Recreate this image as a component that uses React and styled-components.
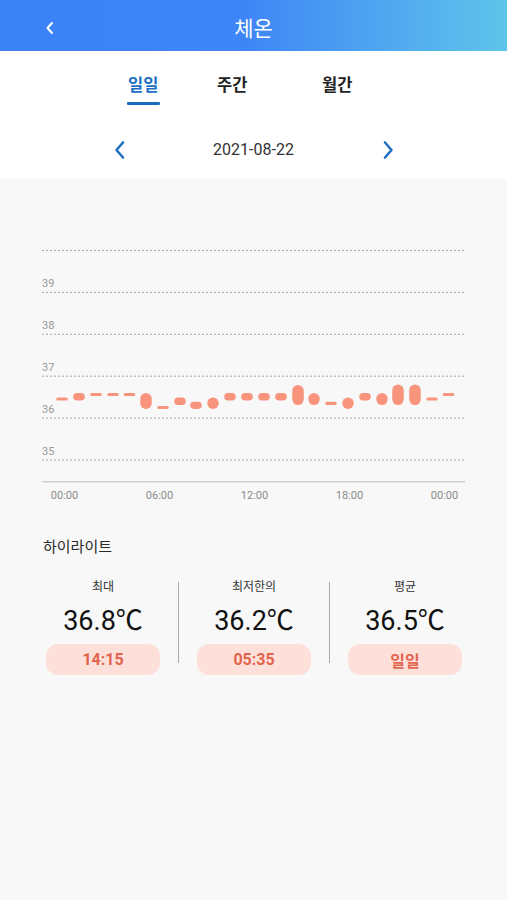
import React, { useState } from 'react';
import styled, { createGlobalStyle } from 'styled-components';

const GlobalStyle = createGlobalStyle`
  html, body {
    margin: 0;
    padding: 0;
    background: #f8f8f8;
  }
  body {
    font-family: Roboto, "Noto Sans CJK KR", sans-serif;
    color: #222;
  }
`;

const Page = styled.div`
  width: 507px;
  min-height: 900px;
  background: #f8f8f8;
`;

const Header = styled.div`
  height: 51px;
  display: flex;
  align-items: center;
  justify-content: center;
  position: relative;
  background: linear-gradient(90deg, #3b82f7 0%, #3e85f7 48%, #5fc4ea 100%);
  color: #fff;
`;

const BackButton = styled.div`
  position: absolute;
  left: 44px;
  top: 20px;
  width: 12px;
  height: 16px;
  display: flex;
`;

const Title = styled.h1`
  margin: 0;
  font-family: "Noto Sans CJK KR", sans-serif;
  font-size: 21px;
  font-weight: 400;
  line-height: 24px;
  margin-top: 2px;
`;

const TopPanel = styled.div`
  background: #fff;
  padding: 22px 0 17px;
`;

const TabBar = styled.div`
  display: grid;
  grid-template-columns: 89px 105px auto;
  padding-left: 128px;
`;

const Tab = styled.div`
  display: flex;
  flex-direction: column;
  align-items: flex-start;
  font-family: "Noto Sans CJK KR", sans-serif;
  font-size: 16.5px;
  font-weight: 700;
  line-height: 22px;
  color: ${p => (p.$active ? '#1b6ec4' : '#222')};
  cursor: pointer;

  &::after {
    content: '';
    display: block;
    width: 33px;
    height: 3.5px;
    margin-top: 6.5px;
    margin-left: -1px;
    border-radius: 1px;
    background: ${p => (p.$active ? '#1b6cc0' : 'transparent')};
  }
`;

const DateRow = styled.div`
  margin-top: 33px;
  height: 24px;
  display: flex;
  align-items: center;
  justify-content: center;
`;

const Arrow = styled.div`
  width: 14px;
  height: 20px;
  display: flex;
  align-items: center;
  justify-content: center;
`;

const DateText = styled.div`
  width: 254px;
  text-align: center;
  font-size: 16px;
  color: #333;
  line-height: 24px;
`;

const ChartWrap = styled.div`
  padding-top: 51px;
`;

const ChartSvg = styled.svg`
  display: block;
`;

const Highlights = styled.div`
  padding: 26px 0 0;
`;

const SectionTitle = styled.div`
  padding-left: 43px;
  font-family: "Noto Sans CJK KR", sans-serif;
  font-size: 15px;
  line-height: 20px;
  color: #2a2a2a;
`;

const StatGrid = styled.div`
  display: grid;
  grid-template-columns: 150px 1px 150px 1px 150px;
  padding-left: 28px;
  margin-top: 22px;
`;

const Divider = styled.div`
  width: 1px;
  height: 81px;
  margin-top: 4px;
  background: #a8a8a8;
`;

const Stat = styled.div`
  display: flex;
  flex-direction: column;
  align-items: center;
`;

const StatLabel = styled.div`
  font-family: "Noto Sans CJK KR", sans-serif;
  font-size: 12px;
  line-height: 16px;
  color: #333;
`;

const StatValue = styled.div`
  margin-top: 11px;
  font-size: 27px;
  line-height: 32px;
  color: #111;
`;

const StatBadge = styled.div`
  margin-top: 7px;
  width: 114px;
  height: 31px;
  border-radius: 12px;
  background: #fde0d9;
  color: #e3644d;
  font-size: 16px;
  font-weight: 700;
  display: flex;
  align-items: center;
  justify-content: center;
`;

// hourly readings: [x, max, min]
const readings = [
  [62, 36.49, 36.42],
  [79, 36.6, 36.42],
  [96, 36.6, 36.535],
  [113, 36.6, 36.535],
  [129.5, 36.6, 36.535],
  [146, 36.6, 36.22],
  [163, 36.29, 36.22],
  [180, 36.49, 36.31],
  [196, 36.39, 36.22],
  [213, 36.49, 36.22],
  [230, 36.6, 36.42],
  [247, 36.6, 36.42],
  [264, 36.6, 36.42],
  [281, 36.6, 36.42],
  [298, 36.79, 36.31],
  [314, 36.6, 36.31],
  [331, 36.39, 36.31],
  [348, 36.49, 36.22],
  [365, 36.6, 36.42],
  [382, 36.6, 36.31],
  [398, 36.8, 36.31],
  [415, 36.8, 36.31],
  [432, 36.49, 36.42],
  [448.5, 36.6, 36.535],
];

const TOP = 230;
const yOf = v => 460 - (v - 35) * 41.9 - TOP;

const Chart = () => {
  const grid = [40, 39, 38, 37, 36, 35];
  const hours = [
    [64.5, '00:00'],
    [159.5, '06:00'],
    [254.5, '12:00'],
    [349.5, '18:00'],
    [444.5, '00:00'],
  ];
  return (
    <ChartSvg width="507" height="280" viewBox="0 0 507 280">
      {grid.map(v => (
        <g key={v}>
          <line
            x1="42"
            x2="465"
            y1={yOf(v)}
            y2={yOf(v)}
            stroke="#a6a6a6"
            strokeWidth="1"
            strokeDasharray="2 2"
          />
          {v < 40 && (
            <text x="42" y={yOf(v) - 5} fontSize="11" fill="#999" fontFamily="Roboto, sans-serif">
              {v}
            </text>
          )}
        </g>
      ))}
      <line x1="42" x2="465" y1={251.7} y2={251.7} stroke="#cfcfcf" strokeWidth="1.5" />
      {hours.map(([x, t], i) => (
        <text
          key={i}
          x={x}
          y={269}
          textAnchor="middle"
          fontSize="11"
          fill="#8a8a8a"
          fontFamily="Roboto, sans-serif"
        >
          {t}
        </text>
      ))}
      {readings.map(([x, hi, lo], i) => {
        const y1 = yOf(hi);
        const h = Math.max(yOf(lo) - y1, 3);
        const w = 11.5;
        return (
          <rect
            key={i}
            x={x - w / 2}
            y={y1}
            width={w}
            height={h}
            rx={Math.min(w / 2, h / 2)}
            fill="#f8937c"
          />
        );
      })}
    </ChartSvg>
  );
};

const tabs = ['일일', '주간', '월간'];

const stats = [
  { label: '최대', value: '36.8℃', badge: '14:15' },
  { label: '최저한의', value: '36.2℃', badge: '05:35' },
  { label: '평균', value: '36.5℃', badge: '일일' },
];

const App = () => {
  const [tab, setTab] = useState(0);

  return (
    <Page>
      <GlobalStyle />
      <Header>
        <BackButton>
          <svg width="12" height="16" viewBox="0 0 12 16">
            <path d="M8 3 L3.5 8 L8 13" fill="none" stroke="#fff" strokeWidth="2" strokeLinecap="round" strokeLinejoin="round" />
          </svg>
        </BackButton>
        <Title>체온</Title>
      </Header>
      <TopPanel>
        <TabBar>
          {tabs.map((t, i) => (
            <Tab key={t} $active={i === tab} onClick={() => setTab(i)}>
              {t}
            </Tab>
          ))}
        </TabBar>
        <DateRow>
          <Arrow>
            <svg width="14" height="20" viewBox="0 0 14 20">
              <path d="M10 2.5 L3.5 10 L10 17.5" fill="none" stroke="#2170c2" strokeWidth="2.6" strokeLinecap="round" strokeLinejoin="round" />
            </svg>
          </Arrow>
          <DateText>2021-08-22</DateText>
          <Arrow>
            <svg width="14" height="20" viewBox="0 0 14 20">
              <path d="M4 2.5 L10.5 10 L4 17.5" fill="none" stroke="#2170c2" strokeWidth="2.6" strokeLinecap="round" strokeLinejoin="round" />
            </svg>
          </Arrow>
        </DateRow>
      </TopPanel>
      <ChartWrap>
        <Chart />
      </ChartWrap>
      <Highlights>
        <SectionTitle>하이라이트</SectionTitle>
        <StatGrid>
          {stats.map((s, i) => (
            <React.Fragment key={s.label}>
              {i > 0 && <Divider />}
              <Stat>
                <StatLabel>{s.label}</StatLabel>
                <StatValue>{s.value}</StatValue>
                <StatBadge>{s.badge}</StatBadge>
              </Stat>
            </React.Fragment>
          ))}
        </StatGrid>
      </Highlights>
    </Page>
  );
};

export default App;
